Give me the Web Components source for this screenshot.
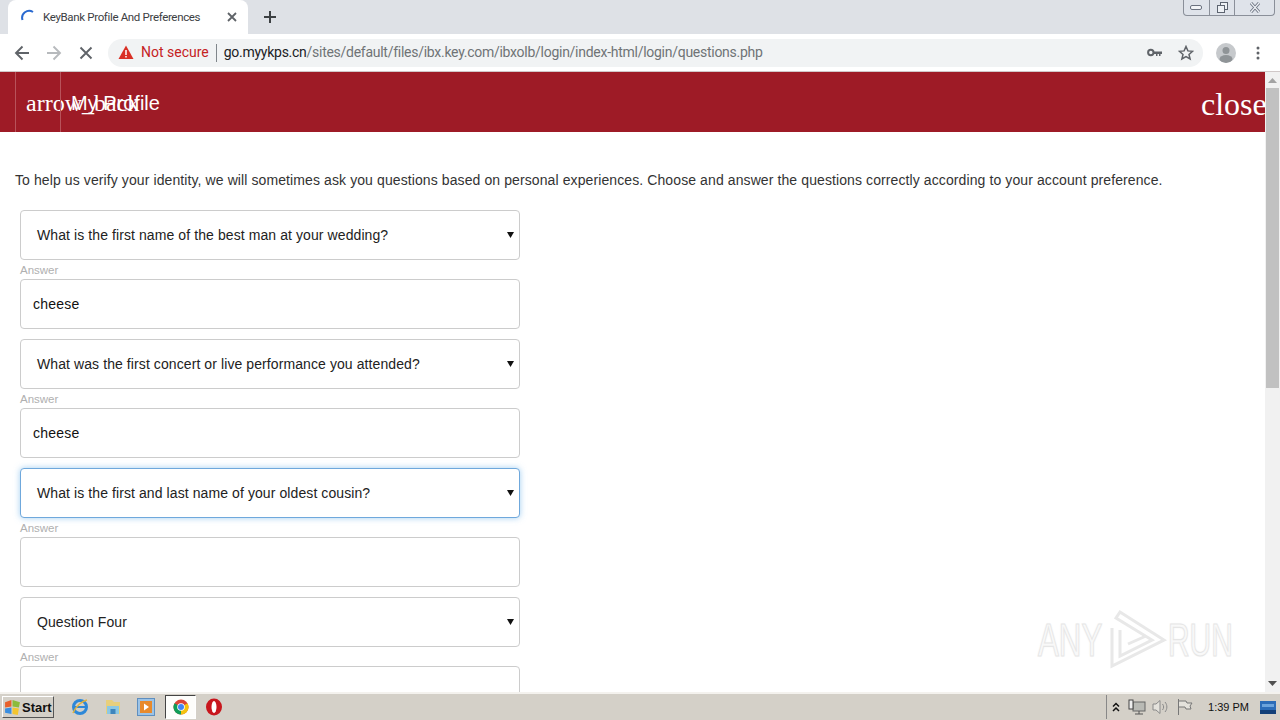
<!DOCTYPE html>
<html><head><meta charset="utf-8"><title>KeyBank Profile And Preferences</title>
<style>
html,body{margin:0;padding:0;width:1280px;height:720px;overflow:hidden;background:#fff}
body{display:flex;flex-direction:column;font-family:"Liberation Sans",Arial,sans-serif}
</style></head><body>
<browser-chrome></browser-chrome>
<page-viewport>
  <key-header></key-header>
  <intro-text>To help us verify your identity, we will sometimes ask you questions based on personal experiences. Choose and answer the questions correctly according to your account preference.</intro-text>
  <question-field question="What is the first name of the best man at your wedding?" answer="cheese"></question-field>
  <question-field question="What was the first concert or live performance you attended?" answer="cheese"></question-field>
  <question-field question="What is the first and last name of your oldest cousin?" focused></question-field>
  <question-field question="Question Four"></question-field>
</page-viewport>
<task-bar></task-bar>
<script>
function def(name,html){
  customElements.define(name,class extends HTMLElement{
    connectedCallback(){
      if(this.shadowRoot)return;
      const r=this.attachShadow({mode:'open'});
      r.innerHTML=typeof html==='function'?html(this):html;
    }
  });
}
def('browser-chrome',`<style>
:host{display:block;flex:none;height:72px;font-family:Roboto,"Open Sans",sans-serif;position:relative}
.strip{height:34px;background:#dee1e6;display:flex;align-items:flex-end}
.tab{margin-left:8px;width:240px;height:34px;box-sizing:border-box;background:#fff;border-radius:8px 8px 0 0;display:flex;align-items:center;padding:0 8px 0 12px;font-size:11.5px;color:#3c4043}
.tab span{margin-left:7px;flex:1;white-space:nowrap;letter-spacing:-.34px}
.plus{margin-left:14px;align-self:center;display:flex}
.win{margin:0 5px 0 auto;align-self:flex-start;width:92px;height:16px;box-sizing:border-box;border:1px solid #8a8f99;border-top:none;border-radius:0 0 4px 4px;display:grid;grid-template-columns:25px 25px 1fr;background:#dfe3ea}
.win div{display:flex;align-items:center;justify-content:center}
.win div+div{border-left:1px solid #8a8f99}
.bar{height:38px;background:#fff;display:flex;align-items:center;box-sizing:border-box;border-bottom:1px solid #d0c8c8}
.nav{width:32px;display:flex;justify-content:center;flex:none}
.omni{margin-left:6px;width:1095px;height:28px;background:#f1f3f4;border-radius:14px;display:flex;align-items:center;font-size:14px;white-space:nowrap;box-sizing:border-box;padding-left:10px}
.ns{color:#c5221f;margin:0 0 1px 7px}
.sep{width:1px;height:18px;background:#80868b;margin:0 7px}
.url{color:#202124;letter-spacing:-.27px;margin-bottom:1px}.url i{font-style:normal;color:#6f7376}
.ri{margin-left:auto;display:flex;align-items:center;gap:16px;padding-right:9px}
.av{margin-left:13px;width:20px;height:20px;border-radius:50%;background:#c6c9cc;display:block;overflow:hidden;flex:none}
.dots{margin-left:20px;display:flex;flex:none}
</style>
<div class="strip">
 <div class="tab">
  <svg width="16" height="16" viewBox="0 0 16 16"><path d="M2.5 11A7 7 0 0 1 13 3" fill="none" stroke="#2a6ad0" stroke-width="2"/></svg>
  <span>KeyBank Profile And Preferences</span>
  <svg width="16" height="16" viewBox="0 0 16 16"><path d="M4 4l8 8M12 4l-8 8" stroke="#5f6368" stroke-width="1.8"/></svg>
 </div>
 <div class="plus"><svg width="16" height="16" viewBox="0 0 16 16"><path d="M8 2v12M2 8h12" stroke="#3c4043" stroke-width="2"/></svg></div>
 <div class="win">
  <div><svg width="13" height="7" viewBox="0 0 13 7"><rect x=".5" y="1.5" width="11" height="4" rx="1.5" fill="#f3f5f8" stroke="#6b7280"/></svg></div>
  <div><svg width="13" height="13" viewBox="0 0 13 13" fill="#eef1f5" stroke="#5d6470"><rect x="4.5" y="1.5" width="7" height="7"/><rect x="1.5" y="4.5" width="7" height="7"/></svg></div>
  <div><svg width="14" height="11" viewBox="0 0 14 11"><path d="M3 1l8 9M11 1l-8 9" stroke="#6b7280" stroke-width="3"/><path d="M3 1l8 9M11 1l-8 9" stroke="#eef1f5" stroke-width="1.2"/></svg></div>
 </div>
</div>
<div class="bar">
 <div class="nav" style="margin-left:6px"><svg width="16" height="16" viewBox="0 0 16 16" fill="none" stroke="#5f6368" stroke-width="1.9"><path d="M15 8H2M8.5 1.5L2 8l6.500 6.500"/></svg></div>
 <div class="nav"><svg width="16" height="16" viewBox="0 0 16 16" fill="none" stroke="#b7babd" stroke-width="1.9"><path d="M1 8h13M7.500 1.500L14 8l-6.500 6.500"/></svg></div>
 <div class="nav"><svg width="14" height="14" viewBox="0 0 14 14" fill="none" stroke="#5f6368" stroke-width="1.9"><path d="M1.500 1.500l11 11M12.500 1.500l-11 11"/></svg></div>
 <div class="omni">
  <svg width="16" height="15" viewBox="0 0 16 15"><path d="M8 .5L15.500 14H.5z" fill="#d93025"/><path d="M8 5v5M8 11v1.500" stroke="#fff" stroke-width="1.500"/></svg>
  <span class="ns">Not secure</span><span class="sep"></span>
  <span class="url">go.myykps.cn<i>/sites/default/files/ibx.key.com/ibxolb/login/index-html/login/questions.php</i></span>
  <div class="ri">
   <svg width="15" height="9" viewBox="0 0 15 9"><circle cx="3.800" cy="4.500" r="2.700" fill="none" stroke="#5f6368" stroke-width="2"/><path d="M6.500 3.500H15V6h-1.500v2H12V6h-1.500v2H9V6H6.500z" fill="#5f6368"/></svg>
   <svg width="16" height="16" viewBox="0 0 16 16"><path d="M8 1.500l1.900 4.400 4.700.4-3.600 3.100 1.100 4.600L8 11.600l-4.100 2.400L5 9.400 1.400 6.300l4.700-.4z" fill="none" stroke="#5f6368" stroke-width="1.500"/></svg>
  </div>
 </div>
 <svg class="av" viewBox="0 0 20 20"><circle cx="10" cy="7.500" r="3.500" fill="#8f9497"/><ellipse cx="10" cy="16" rx="6.500" ry="4" fill="#8f9497"/></svg>
 <div class="dots"><svg width="4" height="14" viewBox="0 0 4 14" fill="#5f6368"><circle cx="2" cy="2" r="1.500"/><circle cx="2" cy="7" r="1.500"/><circle cx="2" cy="12" r="1.500"/></svg></div>
</div>`);
def('page-viewport',`<style>
:host{display:block;flex:none;height:620px;position:relative;overflow:hidden;background:#fff}
.main{width:1265px;height:620px;overflow:hidden}
.sb{position:absolute;right:0;top:0;bottom:0;width:15px;background:#f1f1f1;display:flex;flex-direction:column;align-items:center}
.sb svg{flex:none;margin:6px 0}
.th{position:absolute;left:1px;right:1px;top:16px;height:300px;background:#c1c1c1}
.dn{margin-top:auto!important}
.wm{position:absolute;left:1038px;top:536px;width:198px;height:64px;display:flex;align-items:center;pointer-events:none}
.wm span{font:400 46px/64px "Liberation Sans",sans-serif;color:rgba(255,255,255,.5);-webkit-text-stroke:1.200px #e6e6e6;text-shadow:0 0 3px #f1f1f1;white-space:nowrap}
.a{transform:scaleX(.68);transform-origin:0 50%;width:68px}.r{transform:scaleX(.65);transform-origin:0 50%;width:64px}
</style>
<div class="main"><slot></slot></div>
<div class="wm">
 <span class="a">ANY</span>
 <svg width="62" height="64" viewBox="0 0 62 64" fill="none" stroke="#e8e8e8" stroke-width="3" style="flex:none"><path d="M6 20V58L58 32 14 4 10 10 46 32 14 48V22"/><path d="M22 36l18-8"/></svg>
 <span class="r">RUN</span>
</div>
<div class="sb">
 <svg width="9" height="5" viewBox="0 0 9 5"><path d="M4.500 0L9 5H0z" fill="#a3a3a3"/></svg>
 <div class="th"></div>
 <svg class="dn" width="9" height="5" viewBox="0 0 9 5"><path d="M0 0h9L4.500 5z" fill="#505050"/></svg>
</div>`);
def('key-header',`<style>
:host{display:flex;height:60px;background:#9e1b26;color:#fff;align-items:center;padding-left:15px;margin-bottom:39px}
.c{width:45px;height:60px;box-sizing:border-box;border-left:1px solid #b8525a;padding:3px 0 0 10px;white-space:nowrap;display:flex;align-items:center}
.s{font:24px "Liberation Serif",serif}
.p{font:20px "Liberation Sans",sans-serif}
.x{margin-left:auto;font:32px "Liberation Serif",serif;width:64px;overflow:hidden;white-space:nowrap;padding-top:5px}
</style><div class="c s">arrow_back</div><div class="c p">My Profile</div><div class="x">close</div>`);
def('intro-text',`<style>
:host{display:block;margin:0 0 21px 15px;font:14px/18px "Liberation Sans",sans-serif;color:#333;white-space:nowrap;letter-spacing:.1px}
</style><slot></slot>`);
def('question-field',el=>{
 const q=el.getAttribute('question')||'',a=el.getAttribute('answer')||'',f=el.hasAttribute('focused');
 return `<style>
:host{display:block;width:500px;margin:0 0 10px 20px}
.b{height:50px;box-sizing:border-box;border:1px solid #ccc;border-radius:4px;background:#fff;display:flex;align-items:center;font-size:14px;color:#222;white-space:nowrap;letter-spacing:.09px}
.sel{padding:0 5px 0 16px;justify-content:space-between;${f?'border-color:#6fa8dc;box-shadow:0 0 6px rgba(102,175,233,.6);':''}}
.lab{height:19px;font-size:11.5px;line-height:20px;color:#b0b0b0}
.inp{padding-left:12px;color:#111;letter-spacing:.21px}
svg{flex:none}
</style>
<div class="b sel"><span>${q}</span><svg width="7" height="6" viewBox="0 0 7 6"><path d="M0 0h7L3.500 6z" fill="#111"/></svg></div>
<div class="lab">Answer</div>
<div class="b inp">${a}</div>`;});
def('task-bar',`<style>
:host{display:flex;flex:none;height:28px;box-sizing:border-box;background:#d4d0c8;border-top:2px solid #f4f2ee;align-items:center;position:relative;font-family:"Liberation Sans",sans-serif}
.st{margin-left:2px;width:52px;height:22px;box-sizing:border-box;border:1px solid;border-color:#fff #555 #555 #fff;display:flex;align-items:center;gap:1px;padding-left:1px;font:700 13px "Liberation Sans",sans-serif;color:#111;background:#d4d0c8}
.ic{display:flex;align-items:center;margin-left:17px}
.i{width:18px;height:18px;display:flex}
.ch{margin:0 9px 0 10px;width:31px;height:24px;box-sizing:border-box;background:#fdfdfb;border:1px solid;border-color:#444 #fff #fff #444;display:flex;align-items:center;justify-content:center}
.tray{margin-left:auto;height:24px;border-left:1px solid #888;display:flex;align-items:center;padding-left:3px}
.tray svg{flex:none}
.clk{font-size:11px;color:#111;margin:0 11px 0 15px;white-space:nowrap}
</style>
<div class="st"><svg width="17" height="17" viewBox="0 0 16 16"><path d="M1 3l6-2v6l-6 1z" fill="#e8612c"/><path d="M8 1l7 2-1 5-6-1z" fill="#8cbb3c"/><path d="M1 9l6-1v6l-6-1z" fill="#3a8ee0"/><path d="M8 8l6 1-1 6-5-1z" fill="#f3c52f"/></svg>Start</div>
<div class="ic">
 <svg class="i" viewBox="0 0 18 18"><circle cx="9" cy="9" r="6.500" fill="none" stroke="#2d88d8" stroke-width="3"/><path d="M4 9h10" stroke="#2d88d8" stroke-width="2"/><path d="M2 15C5 8 11 3 16 2" fill="none" stroke="#e2b23a" stroke-width="1.500"/></svg>
 <svg class="i" style="margin-left:15px" viewBox="0 0 18 18"><path d="M2 2h6l2 2h6v12H2z" fill="#e8cf7c"/><path d="M3 8h12v8H3z" fill="#8cc8e4"/><path d="M6.500 11h5v5h-5z" fill="#3f86bc"/></svg>
 <svg class="i" style="margin-left:15px" viewBox="0 0 18 18"><rect x=".5" y=".5" width="17" height="17" fill="#9cc3e6" stroke="#5f8fc0"/><rect x="3" y="3" width="12" height="12" fill="#e88a2c"/><path d="M7 5.500v7l5-3.500z" fill="#fff"/></svg>
 <div class="ch"><svg width="16" height="16" viewBox="0 0 16 16"><circle cx="8" cy="8" r="7.500" fill="#db4437"/><path d="M8 8L14.500 4.200A7.500 7.500 0 0 1 8 15.500z" fill="#f4c20d"/><path d="M8 8V15.500A7.500 7.500 0 0 1 1.500 4.200z" fill="#0f9d58"/><circle cx="8" cy="8" r="3.800" fill="#fff"/><circle cx="8" cy="8" r="3" fill="#4285f4"/></svg></div>
 <svg class="i" viewBox="0 0 18 18"><ellipse cx="9" cy="9" rx="8" ry="8.500" fill="#c8161d"/><ellipse cx="9" cy="9" rx="2.500" ry="6" fill="#fff"/></svg>
</div>
<div class="tray">
 <svg width="12" height="12" viewBox="0 0 12 12" fill="none" stroke="#111" stroke-width="1.500"><path d="M3 5.500l3-3 3 3M3 10l3-3 3 3"/></svg>
 <svg style="margin-left:6px" width="18" height="16" viewBox="0 0 18 16"><rect x="5" y="3" width="12" height="9" fill="#b9bab5" stroke="#666"/><rect x="1" y="1" width="4" height="9" fill="#eee" stroke="#444"/><path d="M11 12v3M7 15h8" stroke="#555"/></svg>
 <svg style="margin-left:6px" width="17" height="16" viewBox="0 0 17 16" fill="none" stroke="#8a8a8a"><path d="M1 5h3l4-3.500v13L4 11H1z" fill="#e4e2dc"/><path d="M10.500 5c1.500 2 1.500 4 0 6M13 3c2.500 3 2.500 7 0 10"/></svg>
 <svg style="margin-left:7px" width="17" height="16" viewBox="0 0 17 16" fill="none" stroke="#777"><path d="M2.500 0v16"/><path d="M3 2h7l1 2h5l-2 3 1 3H10L9 8H3" fill="#e4e2dc"/></svg>
 <span class="clk">1:39 PM</span>
 <svg width="16" height="13" viewBox="0 0 16 13"><rect width="16" height="13" fill="#2b6cb8"/><rect y="9" width="16" height="4" fill="#123f78"/><rect x="2" y="3" width="12" height="3" fill="#6ba3dc"/></svg>
 <span style="width:4px"></span>
</div>`);
</script>
</body></html>
